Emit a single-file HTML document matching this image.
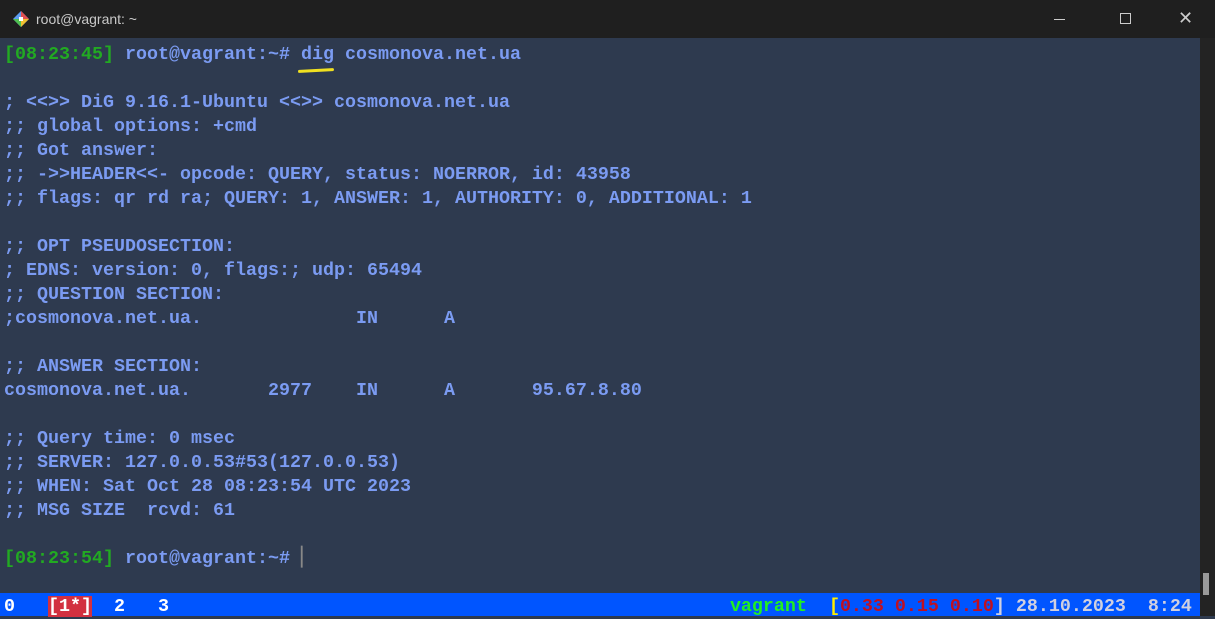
<!DOCTYPE html>
<html><head><meta charset="utf-8"><style>
html,body{margin:0;padding:0;width:1215px;height:616px;overflow:hidden;background:#2e3a4f}
#title{position:absolute;left:0;top:0;width:1215px;height:38px;background:#1f1f1f;color:#c8c8c8;font:14px "Liberation Sans",sans-serif}
#title .t{position:absolute;left:36px;top:11px}
#term{position:absolute;left:0;top:38px;width:1200px;height:578px;background:#2e3a4f}
pre{position:absolute;left:4px;top:43px;margin:0;font:bold 18.33px/24px "Liberation Mono",monospace;color:#7b9bf2;white-space:pre}
.g{color:#22aa22}
#sb{position:absolute;left:0;top:593px;width:1200px;height:23px;background:#0055ff}
#scroll{position:absolute;left:1200px;top:38px;width:15px;height:578px;background:#232323}
#thumb{position:absolute;left:1203px;top:573px;width:6px;height:22px;background:#9a9a9a}
.w{color:#fff}.r{background:#d23040;color:#fff}.vg{color:#22ee22}.y{color:#ffee00}.rd{color:#c01020}.gr{color:#d0d0e0}
</style></head><body>
<div id="title">
<svg style="position:absolute;left:11px;top:9px" width="20" height="20" viewBox="0 0 20 20"><polygon points="10,2 18,10 10,18 2,10" fill="#5b9bf0"/><polygon points="10,10 18,10 10,18" fill="#f0c030"/><polygon points="10,2 18,10 10,10" fill="#e05050"/><polygon points="2,10 10,10 10,18" fill="#50c050"/><rect x="8" y="8" width="4" height="4" fill="#fff"/></svg>
<span class="t">root@vagrant: ~</span>
<div style="position:absolute;left:1054px;top:19px;width:11px;height:1px;background:#ccc"></div>
<div style="position:absolute;left:1120px;top:13px;width:9px;height:9px;border:1px solid #ccc"></div>
<div style="position:absolute;left:1178px;top:8px;color:#ccc;font:18px 'Liberation Sans',sans-serif">✕</div>
</div>
<div id="term"></div>
<div id="scroll"></div><div id="thumb"></div>
<div id="sb"></div>
<div style="position:absolute;left:298px;top:69px;width:36px;height:3px;background:#f0e020;border-radius:2px;transform:rotate(-3deg)"></div>
<pre><span class="g">[08:23:45]</span> root@vagrant:~# dig cosmonova.net.ua

; &lt;&lt;&gt;&gt; DiG 9.16.1-Ubuntu &lt;&lt;&gt;&gt; cosmonova.net.ua
;; global options: +cmd
;; Got answer:
;; -&gt;&gt;HEADER&lt;&lt;- opcode: QUERY, status: NOERROR, id: 43958
;; flags: qr rd ra; QUERY: 1, ANSWER: 1, AUTHORITY: 0, ADDITIONAL: 1

;; OPT PSEUDOSECTION:
; EDNS: version: 0, flags:; udp: 65494
;; QUESTION SECTION:
;cosmonova.net.ua.              IN      A

;; ANSWER SECTION:
cosmonova.net.ua.       2977    IN      A       95.67.8.80

;; Query time: 0 msec
;; SERVER: 127.0.0.53#53(127.0.0.53)
;; WHEN: Sat Oct 28 08:23:54 UTC 2023
;; MSG SIZE  rcvd: 61

<span class="g">[08:23:54]</span> root@vagrant:~# <span style="color:#888;font-weight:normal">▏</span>
<span> </span>
<span class="w">0   <span class="r">[1*]</span>  2   3</span>                                                   <span class="vg">vagrant</span>  <span class="y">[</span><span class="rd">0.33 0.15 0.10</span><span class="gr">] 28.10.2023  8:24</span></pre>
</body></html>
